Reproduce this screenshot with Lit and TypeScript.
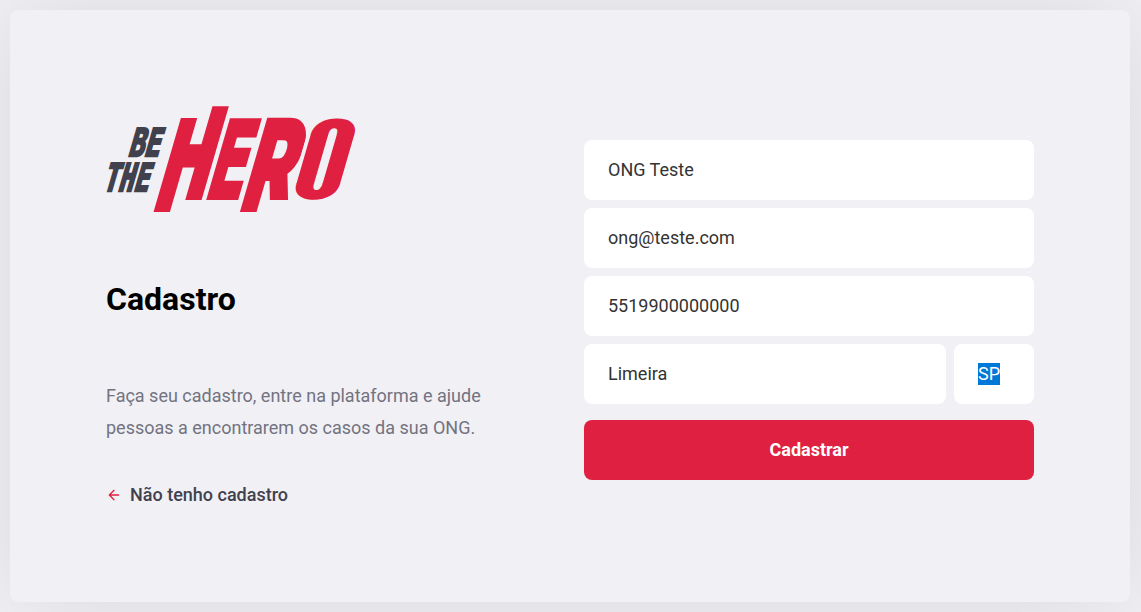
import { LitElement, html, css } from "lit";
import { customElement } from "lit/decorators.js";

@customElement("hero-logo")
class HeroLogo extends LitElement {
  static styles = css`
    :host { display: block; width: 250px; height: 106px; }
    svg { display: block; overflow: visible; }
    text { font-family: "DejaVu Sans Mono", monospace; font-weight: 700; }
    .big { fill: #e02041; stroke: #e02041; stroke-width: 6; }
    .small { fill: #41414d; stroke: #41414d; stroke-width: 2.4; }
    .round { font-family: Roboto, sans-serif; font-weight: 900; }
    .wide { stroke-width: 6.8; }
  `;

  render() {
    return html`
      <svg width="250" height="106" viewBox="106 106 250 106" role="img" aria-label="Be The Hero">
        <defs>
          <clipPath id="h"><path d="M150 -82H179V-95H205V0H179V13H150Z" /></clipPath>
          <clipPath id="r"><path d="M240 -83H288V0H262V13H240Z" /></clipPath>
          <clipPath id="top"><rect x="280" y="-84" width="60" height="18.5" /></clipPath>
          <clipPath id="mid"><rect x="280" y="-66" width="60" height="50" /></clipPath>
          <clipPath id="bottom"><rect x="280" y="-16.5" width="60" height="18.5" /></clipPath>
          <text id="o" class="round wide" y="19.2" font-size="54">O</text>
        </defs>
        <g transform="translate(0 200) skewX(-16.2)">
          <g class="big">
            <g clip-path="url(#h)"><text transform="translate(153 9) scale(.635 1)" font-size="137">H</text></g>
            <text transform="translate(203 -3) scale(.6 1)" font-size="104">E</text>
            <g clip-path="url(#r)"><text class="round" transform="translate(241 9) scale(.61 1)" font-size="124">R</text></g>
            <g clip-path="url(#top)"><use href="#o" transform="translate(293.4 -65.6) scale(1.08 .7)" /></g>
            <g clip-path="url(#mid)"><use href="#o" transform="translate(293.4 -41) scale(1.08 16)" /></g>
            <g clip-path="url(#bottom)"><use href="#o" transform="translate(293.4 -16.4) scale(1.08 .7)" /></g>
          </g>
        </g>
        <g class="small">
          <text transform="translate(127.5 155.5) skewX(-16.2) scale(.69 1)" font-size="38">BE</text>
          <text transform="translate(102 190.5) skewX(-16.2) scale(.67 1)" font-size="38">THE</text>
        </g>
      </svg>
    `;
  }
}

@customElement("app-root")
class AppRoot extends LitElement {
  static styles = css`
    * { box-sizing: border-box; margin: 0; padding: 0; }
    :host {
      display: block;
      height: 612px;
      padding: 10px;
      overflow: hidden;
      background: #f0f0f5;
      font: 400 18px Roboto, sans-serif;
      -webkit-font-smoothing: antialiased;
    }
    .content {
      display: flex;
      justify-content: space-between;
      align-items: center;
      width: 1120px;
      height: 592px;
      padding: 96px;
      background: #f0f0f5;
      border-radius: 8px;
      box-shadow: 0 0 100px rgba(0, 0, 0, 0.1);
    }
    section { width: 380px; height: 400px; }
    h1 { margin: 68px 0 62px; font-size: 32px; line-height: 38px; font-weight: 700; color: #000; }
    p { color: #737380; line-height: 32px; }
    .back {
      display: flex;
      align-items: center;
      margin-top: 40px;
      height: 21px;
      color: #41414d;
      font-weight: 500;
      text-decoration: none;
    }
    .back svg { margin-right: 8px; }
    form { width: 450px; padding-top: 8px; }
    .field {
      display: block;
      width: 100%;
      height: 60px;
      padding: 0 24px 2px;
      border: 0;
      border-radius: 8px;
      background: #fff;
      color: #333;
      font: inherit;
      outline: none;
    }
    .field + .field { margin-top: 8px; }
    .row { display: flex; gap: 8px; margin-top: 8px; }
    .row .field { margin: 0; }
    .row .uf { display: flex; align-items: center; width: 80px; flex: none; padding-bottom: 0; }
    .selected { background: #0078d7; color: #fff; line-height: 22px; }
    button {
      display: block;
      width: 100%;
      height: 60px;
      margin-top: 16px;
      padding-bottom: 2px;
      border: 0;
      border-radius: 8px;
      background: #e02041;
      color: #fff;
      font: 700 18px Roboto, sans-serif;
    }
  `;

  render() {
    return html`
      <div class="content">
        <section>
          <hero-logo></hero-logo>
          <h1>Cadastro</h1>
          <p>Faça seu cadastro, entre na plataforma e ajude pessoas a encontrarem os casos da sua ONG.</p>
          <a class="back" href="#">
            <svg width="16" height="16" viewBox="0 0 24 24" fill="none" stroke="#e02041" stroke-width="2" stroke-linecap="round" stroke-linejoin="round">
              <path d="M19 12H5M12 19l-7-7 7-7" />
            </svg>
            Não tenho cadastro
          </a>
        </section>
        <form>
          <input class="field" aria-label="Nome da ONG" .value=${"ONG Teste"} />
          <input class="field" aria-label="E-mail" .value=${"ong@teste.com"} />
          <input class="field" aria-label="WhatsApp" .value=${"5519900000000"} />
          <div class="row">
            <input class="field" aria-label="Cidade" .value=${"Limeira"} />
            <div class="field uf"><span class="selected">SP</span></div>
          </div>
          <button type="button">Cadastrar</button>
        </form>
      </div>
    `;
  }
}
